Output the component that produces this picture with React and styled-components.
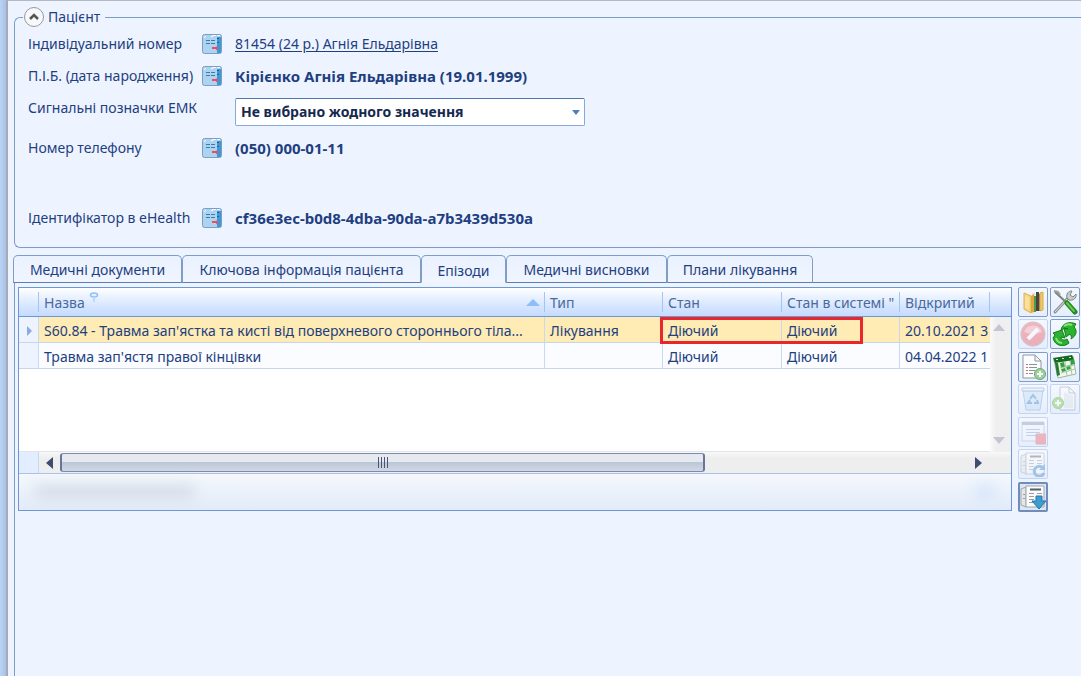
import React from "react";
import styled, { createGlobalStyle, css } from "styled-components";

const font = '"Noto Sans", "Open Sans", sans-serif';

const GlobalStyle = createGlobalStyle`
  * { box-sizing: border-box; }
  html, body, #root { min-height: 100vh; }
  body { margin: 0; background: #eef4ff; color: #1e3f80; font: 14px/20px ${font}; overflow: hidden; }
  button, select { font: inherit; color: inherit; }
`;

const Window = styled.div`
  display: flex;
  min-height: 100vh;
`;

const Edge = styled.div`
  width: 6px;
  flex: none;
  background: linear-gradient(90deg, #b9d3f5, #a9c1e4);
`;

const Page = styled.main`
  flex: 1;
  min-width: 0;
  display: flex;
  flex-direction: column;
  border-left: 2px solid #a4abb6;
  border-top: 1px solid #b4b8c2;
  padding: 6px 0 0 5px;
`;

const Patient = styled.fieldset`
  margin: 0 0 0 1px;
  padding: 1px 0 0 13px;
  min-width: 0;
  height: 241px;
  border: 1px solid #7f9cc8;
  border-right: 0;
  border-radius: 6px 0 0 6px;
`;

const Legend = styled.legend`
  display: flex;
  align-items: center;
  gap: 4px;
  margin-left: -5px;
  padding: 0 5px 0 1px;
  height: 20px;
`;

const Collapse = styled.button`
  width: 20px;
  height: 20px;
  padding: 0;
  display: grid;
  place-items: center;
  border: 1px solid #999;
  border-radius: 50%;
  background: #f6f8fb;
`;

const Field = styled.div`
  display: flex;
  align-items: center;
  height: ${(p) => p.$height}px;
  ${(p) => p.$top && css`align-items: flex-start; padding-top: 6px;`}
`;

const Label = styled.label`
  width: 174px;
  flex: none;
  white-space: nowrap;
`;

const CardButton = styled.button`
  width: 20px;
  height: 20px;
  padding: 0;
  border: 0;
  background: none;
  display: block;
  flex: none;
`;

const Value = styled.output`
  margin-left: 13px;
  font-size: 15px;
  font-weight: 700;
`;

const PatientLink = styled.a`
  margin-left: 13px;
  color: #1e3f80;
  text-underline-offset: 2px;
`;

const SelectBox = styled.div`
  position: relative;
  margin-left: 33px;
  width: 350px;
  svg { position: absolute; right: 5px; top: 12px; pointer-events: none; }
`;

const Select = styled.select`
  appearance: none;
  display: block;
  width: 100%;
  height: 28px;
  padding: 0 24px 0 5px;
  border: 1px solid #84aadd;
  border-top-color: #4c78b0;
  border-radius: 2px;
  background: #fff;
  color: #15294f;
  font-weight: 700;
`;

const Tabs = styled.div`
  display: flex;
  height: 28px;
  margin-top: 7px;
`;

const Tab = styled.button`
  height: 28px;
  width: ${(p) => p.$width}px;
  padding: 2px 0 0;
  white-space: nowrap;
  border: 1px solid #819dc6;
  border-bottom-color: #5c80b4;
  border-radius: 5px 5px 0 0;
  background: linear-gradient(#eaf2ff, #f0f5ff);
  ${(p) => p.$active && css`border-bottom-color: #eef4ff; padding-top: 4px;`}
`;

const TabLine = styled.div`
  flex: 1;
  border-bottom: 1px solid #5c80b4;
`;

const Panel = styled.section`
  flex: 1;
  display: flex;
  align-items: flex-start;
  margin-left: 1px;
  padding: 4px 1px 0 3px;
  border-left: 1px solid #7f9cc8;
`;

const Grid = styled.div`
  flex: 1;
  min-width: 0;
  border: 1px solid #6b97d4;
  background: #fff;
`;

const GridTop = styled.div`
  display: flex;
  height: 164px;
`;

const TableArea = styled.div`
  flex: 1;
  min-width: 0;
  border-bottom: 1px solid #e2e4ea;
`;

const Table = styled.table`
  width: 100%;
  table-layout: fixed;
  border-collapse: separate;
  border-spacing: 0;
`;

const headFill = css`
  height: 29px;
  border-bottom: 1px solid #6b97d4;
  background: linear-gradient(#ffffff, #dfebff 50%, #c4daff);
`;

const Th = styled.th`
  ${headFill}
  padding: 0;
  font-weight: 400;
  text-align: left;
  color: #4a6a9c;
`;

const HeadCell = styled.div`
  display: flex;
  height: 20px;
  line-height: 22px;
  padding: 0 5px;
  overflow: hidden;
  white-space: nowrap;
  border-right: 1px solid #9fc6f9;
  svg { flex: none; }
  .sort { margin: 7px -1px 0 auto; }
  .pin { margin-left: 4px; }
`;

const Td = styled.td`
  position: relative;
  height: 26px;
  padding: 2px 0 0;
  background: ${(p) => (p.$selected ? "#ffebb4" : "#fafcff")};
  border-right: 1px solid #c8d8f0;
  border-bottom: 1px solid #c8d4ec;
  &:last-child { border-right: 0; }
`;

const Marker = styled(Td)`
  background: #edf3ff;
  svg { display: block; margin-left: 8px; }
`;

const CellText = styled.div`
  padding-left: 5px;
  overflow: hidden;
  white-space: nowrap;
`;

const Highlight = styled.div`
  position: absolute;
  z-index: 1;
  left: -3px;
  top: 0;
  width: 203px;
  height: 27px;
  border: 3px solid #e9262b;
`;

const SideScroll = styled.div`
  width: 21px;
  flex: none;
  display: flex;
  flex-direction: column;
`;

const HeadCap = styled.div`
  ${headFill}
`;

const VBar = styled.div`
  flex: 1;
  display: flex;
  flex-direction: column;
  align-items: center;
  justify-content: space-between;
  padding: 7px 3px 8px 0;
  background: linear-gradient(90deg, #fafafa, #efefef 6px);
`;

const HBar = styled.div`
  display: flex;
  align-items: center;
  height: 21px;
  padding-right: 29px;
  background: linear-gradient(#f8f8f8, #eeeeee 6px);
`;

const HCorner = styled.div`
  width: 20px;
  align-self: stretch;
  margin-right: 7px;
  background: #e2edff;
  border-right: 1px solid #c8d8f0;
`;

const Track = styled.div`
  flex: 1;
  margin: 0 6px 0 7px;
`;

const Thumb = styled.div`
  width: 71%;
  height: 19px;
  display: grid;
  place-items: center;
  border: 2px solid #6a7699;
  border-top: 1px solid #7f8bab;
  border-bottom: 1px solid #7f8bab;
  border-radius: 3px;
  background: linear-gradient(#e6e9ef 45%, #bcc7d6 50%, #d0d8e4);
`;

const Footer = styled.div`
  height: 37px;
  padding: 11px 16px 0;
  display: flex;
  justify-content: space-between;
  border-top: 1px solid #a9c3ec;
  background: linear-gradient(#f5f8fd, #e3ebf9);
`;

const Smudge = styled.div`
  width: ${(p) => p.$width}px;
  height: 14px;
  background: ${(p) => p.$color};
  filter: blur(7px);
`;

const Tools = styled.div`
  display: grid;
  grid-template-columns: 30px 30px;
  grid-auto-rows: 30px 31px;
  gap: 2px;
  margin-left: 6px;
`;

const Tool = styled.button`
  width: 30px;
  height: 30px;
  padding: 0;
  display: grid;
  place-items: center;
  border: 1px solid #7f9cc8;
  border-radius: 2px;
  background: linear-gradient(#f4f8ff, #e4eefd);
  &:disabled { border-color: #c4d4ee; }
  &:disabled svg { opacity: 0.42; }
  ${(p) => p.$pressed && css`border: 2px solid #6f8db8; background: #dce6f5;`}
`;

const Tri = ({ d, w, h, fill, className }) => (
  <svg className={className} width={w} height={h} viewBox={`0 0 ${w} ${h}`} aria-hidden="true"><path d={d} fill={fill} /></svg>
);

const CardIcon = () => (
  <svg width="20" height="20" viewBox="0 0 20 20" display="block" aria-hidden="true">
    <rect x=".5" y=".5" width="19" height="19" rx="2" fill="#acd3ef" stroke="#7d9cc6" />
    <path d="M15 3h4v16h-4z" fill="#3f98d3" />
    <path d="M2 4 4 2M10 1.500h4M15 1.500h3M9 2.500h2" stroke="#f5fbff" />
    <path d="M4 6.500h4M9 6.500h4M4 9.500h4M9 9.500h4" stroke="#3d7ca8" />
    <path d="M15 4.500h2M15 8.500h2" stroke="#235f91" />
    <path d="M10 13h4v-1l2 2.500-2 2V15h-4z" fill="#f44b5a" />
  </svg>
);

const Paper = ({ x = 5, y = 2, w = 17, h = 22 }) => (
  <path d={`M${x} ${y}h${w - 6}l6 6v${h - 6}h-${w}zM${x + w - 6} ${y}v6h6`} fill="#fbfcfd" stroke="#8f979f" />
);

const News = () => (
  <>
    <path d="M1 5l5-2v20l-5-2z" fill="#e4e7e8" stroke="#a0a7ad" />
    <path d="M6 2h18v21H6z" fill="#fafbfa" stroke="#a0a7ad" />
    <path d="M10 5.500h11" stroke="#555f68" strokeWidth="2" />
    <path d="M9 9.500h5M9 12.500h5M9 15.500h5M9 18.500h5M17 9.500h5M17 12.500h5M17 15.500h5M3 10.500h2M3 14.500h2" stroke="#9a9fa1" />
  </>
);

const icons = {
  folder: (
    <>
      <path d="M12 4h3v17h-3z" fill="#e8e3cf" />
      <path d="M14 7h2v16h-2z" fill="#4f9656" /><path d="M16 3h3v19h-3z" fill="#3d4a40" /><path d="M19 5h1v17h-1z" fill="#cc543b" />
      <path d="M4 4l7 3v17l-7-4z" fill="#f6d583" stroke="#dfb152" />
      <path d="M11 7l3-2v18l-3 1z" fill="#dfa93e" />
      <path d="M20 4l3-1v18l-3 1z" fill="#f0ca69" stroke="#d9ab48" />
      <path d="M6 7v12M8 8v12" stroke="#fdebb9" />
    </>
  ),
  tools: (
    <>
      <path d="M3 23 17 8" stroke="#8b9290" strokeWidth="3" strokeLinecap="round" />
      <path d="M3 23 17 8" stroke="#dfe4e2" strokeWidth="1" />
      <path d="M15 9c-1-4 1-7 5-7l-2 4 3 2 3-3c1 4-3 7-7 6z" fill="#c7cecc" stroke="#7e8784" />
      <path d="M3 3 15 14" stroke="#78807e" strokeWidth="2" /><path d="m2 2 4 1 2 3" fill="none" stroke="#9ba3a0" strokeWidth="2" />
      <path d="m15 14 8 9" stroke="#238a24" strokeWidth="5" strokeLinecap="round" />
      <path d="m15 14 7 8" stroke="#69c74d" strokeWidth="2" strokeLinecap="round" />
    </>
  ),
  stop: (
    <>
      <circle cx="13" cy="13" r="11.500" fill="#f2565f" stroke="#c9737c" strokeWidth="2" />
      <path d="M4 11a9.500 9.500 0 0 1 18 0Q13 15 4 11" fill="#f8a0a4" />
      <path d="m8 18 10-10" stroke="#fff" strokeWidth="4" />
    </>
  ),
  refresh: (
    <g stroke="#167d1b" fill="#29b32e" strokeLinejoin="round">
      <path d="M9 9C10 2 18 0 24 3l-2 3c4 4 2 9-3 12 1-2 0-4-1-5l-4 3-2-9 4 1c-2-1-5 0-7 1z" />
      <path d="M1 17 3 14 1 12 10 9l3 8-4-1c0 3 3 4 6 2l2 4c-4 4-14 4-16-5z" />
      <path d="M12 5c3-2 6-2 8-1M4 17c1 3 3 5 6 5" fill="none" stroke="#8fe477" strokeWidth="2" />
    </g>
  ),
  add: (
    <>
      <Paper x={3} y={1} w={18} h={23} />
      <path d="M9 10.500h8M9 13.500h8M9 16.500h6M9 19.500h4" stroke="#8d9397" />
      <path d="M6 10.500h2M6 13.500h2M6 16.500h2M6 19.500h2" stroke="#df6a63" />
      <circle cx="20" cy="20" r="5.500" fill="#9bd29a" stroke="#6aa873" />
      <path d="M20 17v6M17 20h6" stroke="#fff" strokeWidth="2" />
    </>
  ),
  calendar: (
    <>
      <path d="M2 6 21 2l3 18-18 4z" fill="#f3f7f2" stroke="#9fb8a0" />
      <path d="M1 4 20 1l2 5L3 9z" fill="#176a23" />
      <path d="M3 9h3l2 12-3 1z" fill="#257c2e" />
      <path d="m8 9 4-1 1 5-4 1zM14 12l4-1 1 4-4 1zM18 6l4-1 1 5-4 1zM9 15l4-1 1 3-4 1z" fill="#33a339" />
      <path d="m8 14 14-3M9 19l14-4M13 8l2 14M18 7l2 14" stroke="#a5c9a6" />
      <path d="M4 5.500h2M10 4.500h2M17 3.500h2" stroke="#c2e9ba" />
    </>
  ),
  recycle: (
    <>
      <path d="m3 5 3 19h14l3-19z" fill="#c4def4" stroke="#7aa4cf" />
      <path d="M2 2h22v3H2z" fill="#e2f0fb" stroke="#7299c5" />
      <path d="m10 13 3-4 3 4M17 14l1 3h-4M12 17H8l2-3" fill="none" stroke="#4580c6" strokeWidth="2" />
    </>
  ),
  export: (
    <>
      <Paper x={8} y={1} w={15} h={23} />
      <path d="M12 22V6l9 4v12z" fill="#dfe2e2" />
      <circle cx="6" cy="17" r="5.500" fill="#79c83f" stroke="#58a32c" />
      <path d="M6 14v6M3 17h6" stroke="#fff" strokeWidth="2" />
    </>
  ),
  record: (
    <>
      <path d="M2 3h22v19H2z" fill="#f4f7fc" stroke="#a7b5ca" /><path d="M2 3h22v3H2z" fill="#8796b0" />
      <path d="M6 10.500h14M6 13.500h14M6 16.500h10" stroke="#7da6de" />
      <path d="M16 15h10v10H16z" fill="#f0656b" stroke="#d9636a" />
    </>
  ),
  newsRefresh: (
    <>
      <News />
      <path d="M23 17a5 5 0 1 0 1 5" fill="none" stroke="#4382cc" strokeWidth="3" /><path d="M25 13v6h-6z" fill="#4382cc" />
    </>
  ),
  newsDown: (
    <>
      <News />
      <path d="M16 12h6v5h4l-7 8-7-8h4z" fill="#3b9dd1" stroke="#2478aa" />
    </>
  ),
};

const toolList = [
  ["folder", "Відкрити"], ["tools", "Налаштування"],
  ["stop", "Скасувати", true], ["refresh", "Оновити"],
  ["add", "Додати"], ["calendar", "Календар"],
  ["recycle", "Видалити", true], ["export", "Експорт", true],
  ["record", "Закрити", true], null,
  ["newsRefresh", "Перечитати", true], null,
  ["newsDown", "Завантажити", false, true],
];

const tabs = [
  ["Медичні документи", 169], ["Ключова інформація пацієнта", 239], ["Епізоди", 85, true],
  ["Медичні висновки", 161], ["Плани лікування", 146],
];

const rows = [
  ["S60.84 - Травма зап'ястка та кисті від поверхневого стороннього тіла...", "Лікування", "Діючий", "Діючий", "20.10.2021 3"],
  ["Травма зап'ястя правої кінцівки", "", "Діючий", "Діючий", "04.04.2022 1"],
];

const InfoRow = ({ id, label, height, children }) => (
  <Field $height={height}>
    <Label htmlFor={id}>{label}</Label>
    <CardButton type="button" aria-label={label}><CardIcon /></CardButton>
    {children}
  </Field>
);

export default function App() {
  return (
    <Window>
      <GlobalStyle />
      <Edge />
      <Page>
        <Patient>
          <Legend>
            <Collapse type="button" aria-label="Згорнути">
              <svg width="10" height="8" viewBox="0 0 10 8"><path d="m1 6 4-4 4 4" fill="none" stroke="#555" strokeWidth="2.500" /></svg>
            </Collapse>
            Пацієнт
          </Legend>
          <InfoRow id="num" label="Індивідуальний номер" height={32}>
            <PatientLink id="num" href="#patient">81454 (24 р.) Агнія Ельдарівна</PatientLink>
          </InfoRow>
          <InfoRow id="name" label="П.І.Б. (дата народження)" height={32}>
            <Value id="name">Кірієнко Агнія Ельдарівна (19.01.1999)</Value>
          </InfoRow>
          <Field $height={40} $top>
            <Label htmlFor="marks">Сигнальні позначки ЕМК</Label>
            <SelectBox>
              <Select id="marks"><option>Не вибрано жодного значення</option></Select>
              <Tri w={8} h={5} d="M0 0h8L4 5z" fill="#4d7fb8" />
            </SelectBox>
          </Field>
          <InfoRow id="phone" label="Номер телефону" height={32}>
            <Value id="phone">(050) 000-01-11</Value>
          </InfoRow>
          <Field $height={38} />
          <InfoRow id="ehealth" label="Ідентифікатор в eHealth" height={32}>
            <Value id="ehealth">cf36e3ec-b0d8-4dba-90da-a7b3439d530a</Value>
          </InfoRow>
        </Patient>

        <Tabs>
          {tabs.map(([name, width, active]) => (
            <Tab key={name} type="button" $width={width} $active={active}>{name}</Tab>
          ))}
          <TabLine />
        </Tabs>

        <Panel>
          <Grid>
            <GridTop>
              <TableArea>
                <Table>
                  <colgroup>
                    <col width="20" /><col /><col width="118" /><col width="119" /><col width="118" /><col width="90" />
                  </colgroup>
                  <thead>
                    <tr>
                      <Th><HeadCell /></Th>
                      <Th>
                        <HeadCell>
                          Назва
                          <svg className="pin" width="10" height="12" viewBox="0 0 10 12">
                            <ellipse cx="5" cy="3" rx="3.500" ry="2" fill="#e3f0ff" stroke="#8fc0fb" strokeWidth="1.500" />
                            <path d="M5 5v5" stroke="#b8d7fc" strokeWidth="2" />
                          </svg>
                          <Tri className="sort" w={14} h={7} d="M0 7h14L7 0z" fill="#8ebdfa" />
                        </HeadCell>
                      </Th>
                      <Th><HeadCell>Тип</HeadCell></Th>
                      <Th><HeadCell>Стан</HeadCell></Th>
                      <Th><HeadCell>Стан в системі "</HeadCell></Th>
                      <Th><HeadCell>Відкритий</HeadCell></Th>
                    </tr>
                  </thead>
                  <tbody>
                    {rows.map((row, r) => (
                      <tr key={row[0]}>
                        <Marker>{r === 0 && <Tri w={6} h={10} d="M0 0l5 5-5 5z" fill="#8aabdc" />}</Marker>
                        {row.map((text, c) => (
                          <Td key={c} $selected={r === 0}>
                            <CellText>{text}</CellText>
                            {r === 0 && c === 2 && <Highlight />}
                          </Td>
                        ))}
                      </tr>
                    ))}
                  </tbody>
                </Table>
              </TableArea>
              <SideScroll>
                <HeadCap />
                <VBar>
                  <Tri w={12} h={7} d="M0 7h12L6 0z" fill="#c3c5d2" />
                  <Tri w={12} h={7} d="M0 0h12L6 7z" fill="#c3c5d2" />
                </VBar>
              </SideScroll>
            </GridTop>
            <HBar>
              <HCorner />
              <Tri w={7} h={12} d="M7 0v12L0 6z" fill="#3f4c72" />
              <Track>
                <Thumb><svg width="10" height="11"><path d="M.500 0v11M3.500 0v11M6.500 0v11M9.500 0v11" stroke="#4a5573" /></svg></Thumb>
              </Track>
              <Tri w={7} h={12} d="M0 0v12L7 6z" fill="#3f4c72" />
            </HBar>
            <Footer><Smudge $width={160} $color="#d6dde8" /><Smudge $width={20} $color="#d4e5fa" /></Footer>
          </Grid>
          <Tools>
            {toolList.map((tool, i) => tool ? (
              <Tool key={tool[0]} type="button" aria-label={tool[1]} disabled={!!tool[2]} $pressed={tool[3]}>
                <svg width="26" height="26" viewBox="0 0 26 26" fill="none">{icons[tool[0]]}</svg>
              </Tool>
            ) : <span key={i} />)}
          </Tools>
        </Panel>
      </Page>
    </Window>
  );
}
